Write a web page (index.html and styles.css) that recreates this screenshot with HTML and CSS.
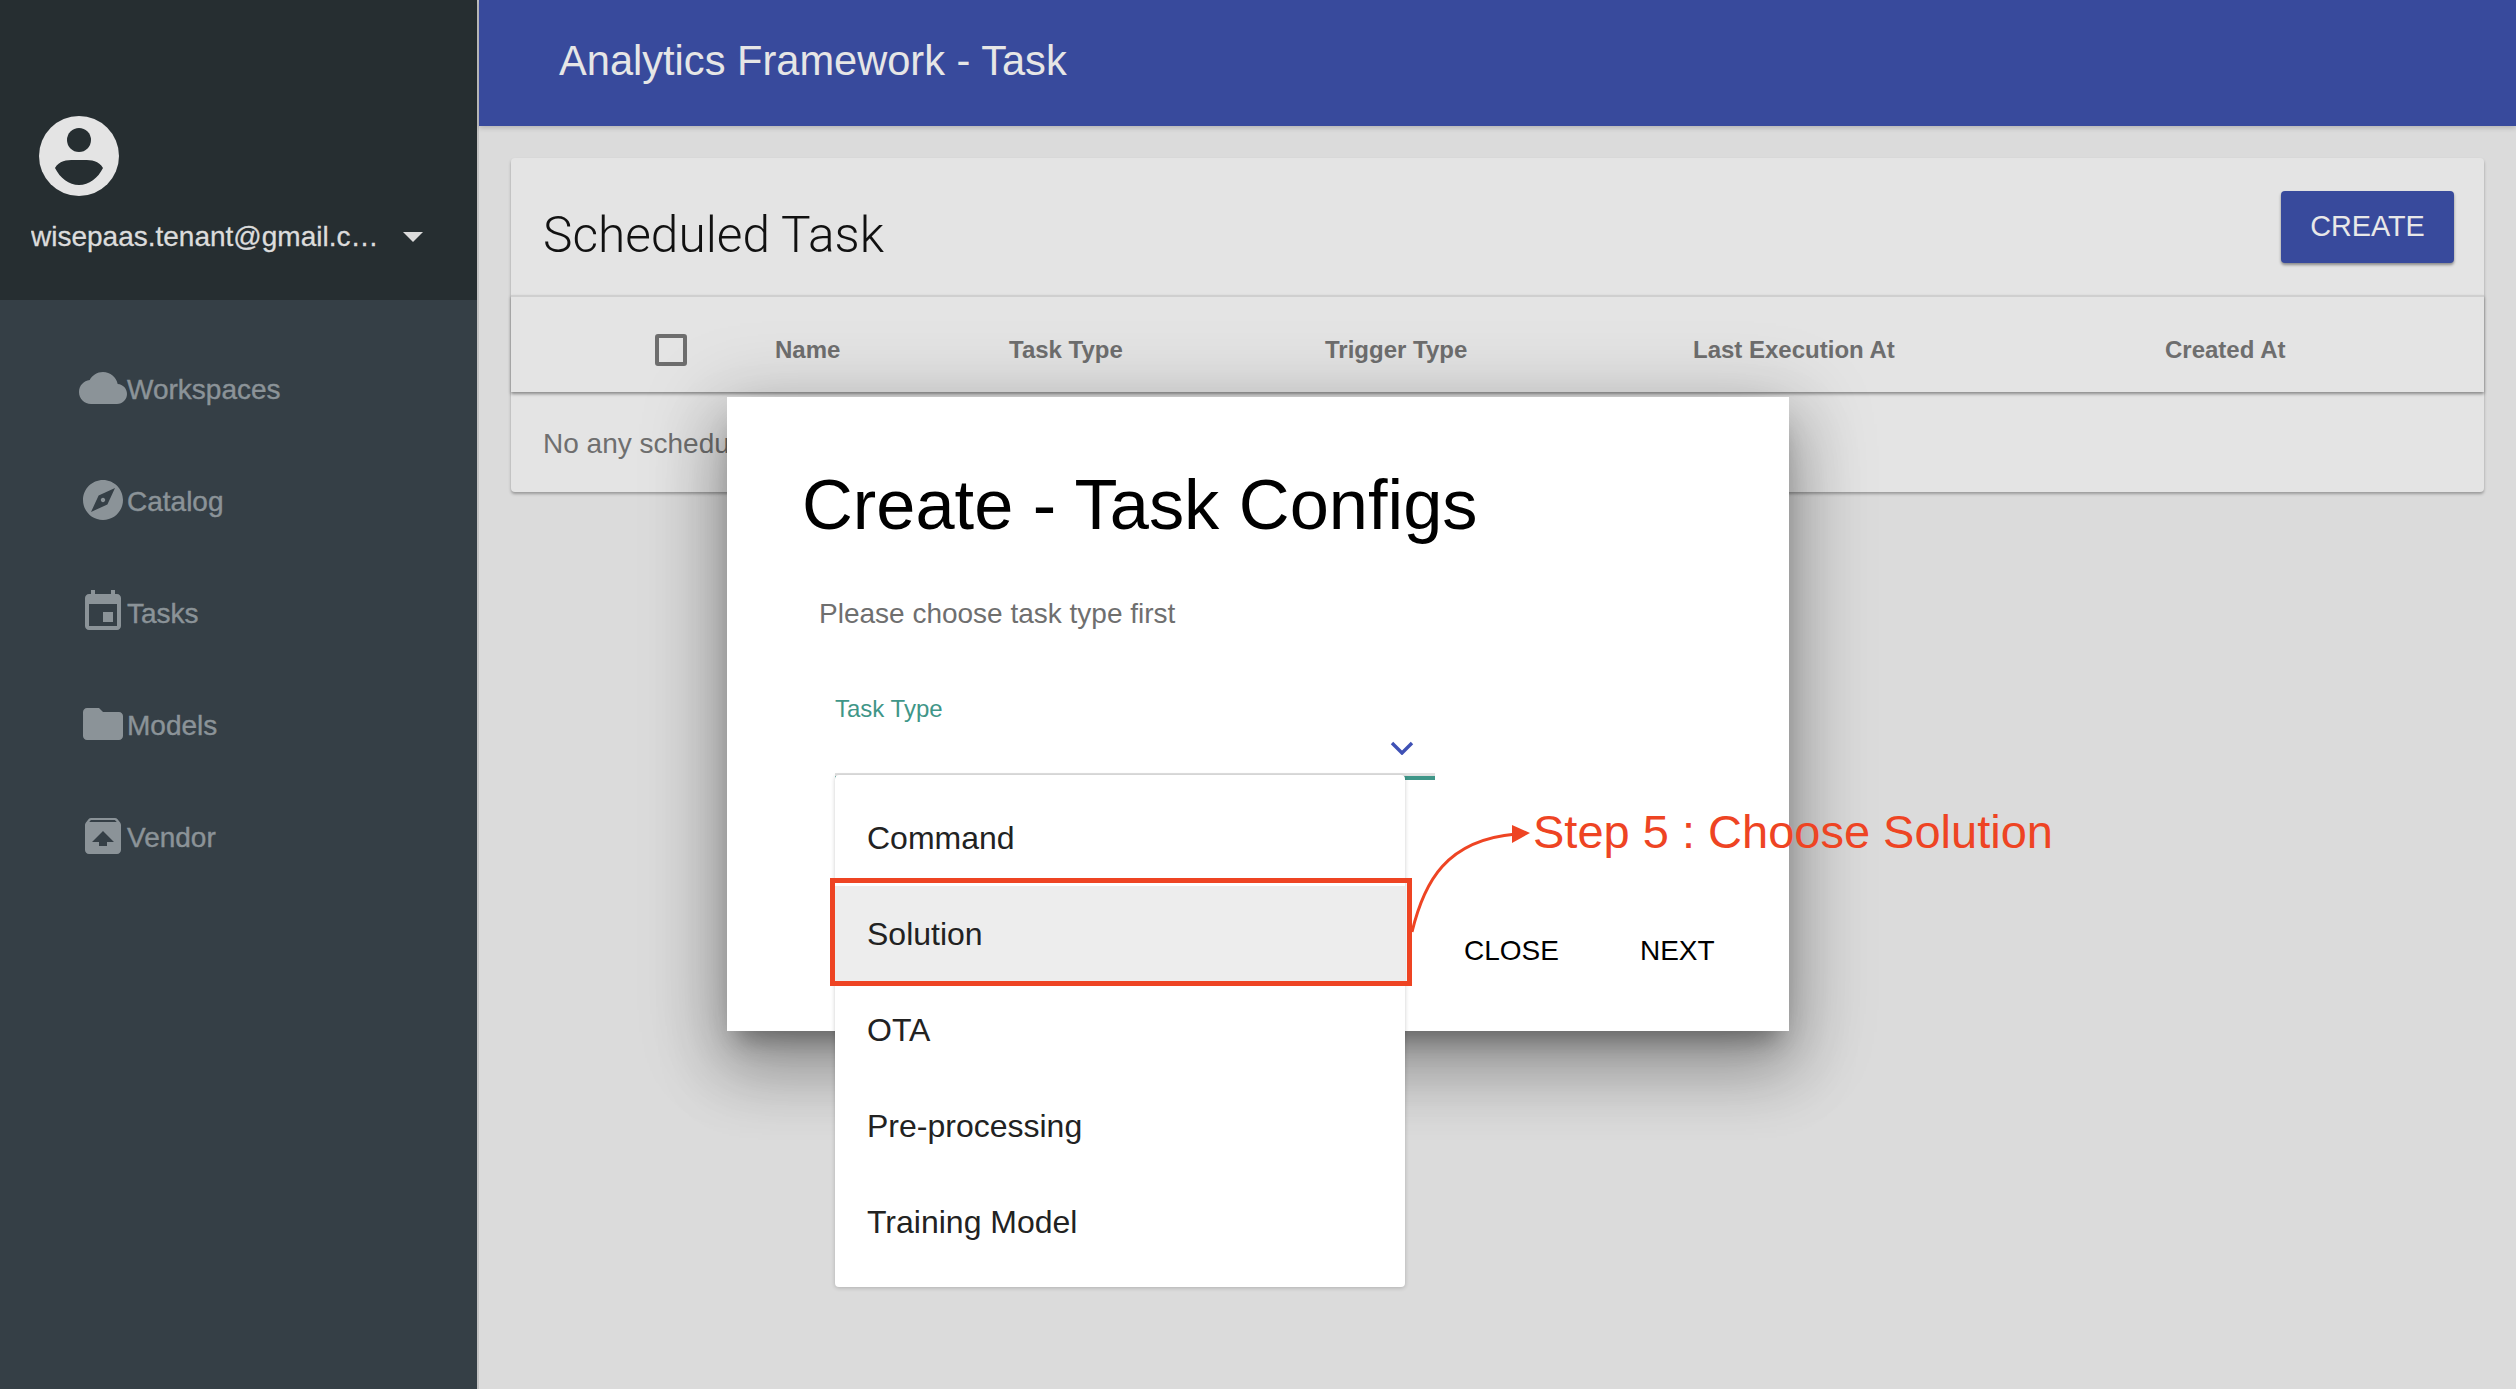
FILE: index.html
```html
<!DOCTYPE html>
<html lang="en">
<head>
<meta charset="utf-8">
<title>Analytics Framework - Task</title>
<link rel="stylesheet" href="styles.css">
</head>
<body>
<div class="app">
  <aside class="sidebar">
    <div class="user">
      <svg class="avatar" viewBox="0 0 80 80"><circle cx="40" cy="40" r="40" fill="#e4e4e4"/><circle cx="40" cy="24" r="12" fill="#262e31"/><path d="M16 52C21 43 31 44 40 44S59 43 64 52C59 62 50 69 40 69S21 62 16 52Z" fill="#262e31"/></svg>
      <div class="user-row">
        <span class="user-name">wisepaas.tenant@gmail.com</span>
        <span class="caret"></span>
      </div>
    </div>
    <nav class="nav">
      <a class="nav-item"><svg viewBox="0 0 24 24"><path d="M19.35 10.04C18.67 6.59 15.64 4 12 4 9.11 4 6.6 5.64 5.35 8.04 2.34 8.36 0 10.91 0 14c0 3.31 2.69 6 6 6h13c2.76 0 5-2.24 5-5 0-2.64-2.05-4.78-4.65-4.96z"/></svg><span class="nav-label">Workspaces</span></a>
      <a class="nav-item"><svg viewBox="0 0 24 24"><path d="M12 10.9c-.61 0-1.1.49-1.1 1.1s.49 1.1 1.1 1.1c.61 0 1.1-.49 1.1-1.1s-.49-1.1-1.1-1.1zM12 2C6.48 2 2 6.48 2 12s4.48 10 10 10 10-4.48 10-10S17.52 2 12 2zm2.19 12.19L6 18l3.81-8.19L18 6l-3.81 8.19z"/></svg><span class="nav-label">Catalog</span></a>
      <a class="nav-item"><svg viewBox="0 0 24 24"><path d="M17 12h-5v5h5v-5zM16 1v2H8V1H6v2H5c-1.11 0-1.99.9-1.99 2L3 19c0 1.1.89 2 2 2h14c1.1 0 2-.9 2-2V5c0-1.1-.9-2-2-2h-1V1h-2zm3 18H5V8h14v11z"/></svg><span class="nav-label">Tasks</span></a>
      <a class="nav-item"><svg viewBox="0 0 24 24"><path d="M10 4H4c-1.1 0-1.99.9-1.99 2L2 18c0 1.1.9 2 2 2h16c1.1 0 2-.9 2-2V8c0-1.1-.9-2-2-2h-8l-2-2z"/></svg><span class="nav-label">Models</span></a>
      <a class="nav-item"><svg viewBox="0 0 24 24"><path d="M20.55 5.22l-1.39-1.68C18.88 3.21 18.47 3 18 3H6c-.47 0-.88.21-1.15.55L3.46 5.22C3.17 5.57 3 6.01 3 6.5V19c0 1.1.89 2 2 2h14c1.1 0 2-.9 2-2V6.5c0-.49-.17-.93-.45-1.28zM12 9.5l5.5 5.5H14v2h-4v-2H6.5L12 9.5zM5.12 5l.82-1h12l.93 1H5.12z"/></svg><span class="nav-label">Vendor</span></a>
    </nav>
  </aside>
  <main class="main">
    <header class="topbar"><h1 class="topbar-title">Analytics Framework - Task</h1></header>
    <section class="content">
      <div class="card">
        <div class="card-head">
          <h2 class="card-title">Scheduled Task</h2>
          <button class="btn-create">CREATE</button>
        </div>
        <div class="table-head">
          <span class="check"></span>
          <span>Name</span>
          <span>Task Type</span>
          <span>Trigger Type</span>
          <span>Last Execution At</span>
          <span>Created At</span>
        </div>
        <div class="table-empty">No any scheduled task</div>
      </div>
    </section>
  </main>
</div>

<div class="dialog">
  <h3 class="dialog-title">Create - Task Configs</h3>
  <p class="dialog-hint">Please choose task type first</p>
  <div class="field">
    <label class="field-label">Task Type</label>
    <svg class="chevron" viewBox="0 0 24 14"><path d="M2 2L12 12L22 2" fill="none" stroke="#3f51b5" stroke-width="3.4"/></svg>
    <div class="field-line"></div>
  </div>
  <div class="dialog-actions">
    <span class="action">CLOSE</span>
    <span class="action">NEXT</span>
  </div>
  <ul class="menu">
    <li class="menu-item">Command</li>
    <li class="menu-item is-hover">Solution</li>
    <li class="menu-item">OTA</li>
    <li class="menu-item">Pre-processing</li>
    <li class="menu-item">Training Model</li>
  </ul>
</div>

<div class="mark-box"></div>
<svg class="mark-arrow" viewBox="0 0 130 120"><path d="M2 112C14 62 36 20 106 14" fill="none" stroke="#ee4423" stroke-width="3"/><path d="M102 5L120 13L102 23Z" fill="#ee4423"/></svg>
<div class="mark-text">Step 5 : Choose Solution</div>
</body>
</html>
```

FILE: styles.css
```css
* { box-sizing: border-box; }
html, body { margin: 0; padding: 0; height: 100%; overflow: hidden; }
body { font-family: "Liberation Sans", Arial, sans-serif; background: #dbdbdb; }
h1, h2, h3, p, ul { margin: 0; padding: 0; font-weight: 400; }

.app { display: flex; height: 1389px; }

.sidebar { width: 479px; flex: none; background: #353f46; border-right: 2px solid #c2c2c2; display: flex; flex-direction: column; }
.user { height: 300px; background: #262e31; padding: 116px 0 0 39px; }
.avatar { display: block; width: 80px; height: 80px; }
.user-row { display: flex; align-items: center; margin: 21px 0 0 -8px; height: 40px; }
.user-name { width: 354px; font-size: 28px; color: #dcdcdc; white-space: nowrap; overflow: hidden; text-overflow: ellipsis; -webkit-text-stroke: .3px #dcdcdc; }
.caret { margin-left: 18px; width: 0; height: 0; border-left: 10px solid transparent; border-right: 10px solid transparent; border-top: 10px solid #dcdcdc; }

.nav { display: flex; flex-direction: column; gap: 64px; padding: 64px 0 0 79px; }
.nav-item { display: flex; align-items: center; height: 48px; font-size: 28px; color: #8b9398; }
.nav-item svg { width: 48px; height: 48px; fill: #8b9398; flex: none; }
.nav-label { padding-top: 3px; -webkit-text-stroke: .4px #8b9398; }

.main { flex: 1; min-width: 0; display: flex; flex-direction: column; }
.topbar { height: 126px; flex: none; background: #384a9c; padding: 0 0 5px 80px; display: flex; align-items: center; box-shadow: 0 2px 5px rgba(0,0,0,.18); }
.topbar-title { font-size: 41.6px; color: #e6e6e6; }
.content { padding: 32px 32px 0 32px; }

.card { background: #e4e4e4; border-radius: 4px; box-shadow: 0 2px 3px rgba(0,0,0,.3); }
.card-head { height: 137px; padding: 0 30px 0 32px; display: flex; align-items: center; justify-content: space-between; }
.card-title { font-family: Roboto, "Liberation Sans", sans-serif; font-weight: 300; font-size: 49.6px; color: #111; margin-top: 16px; }
.btn-create { width: 173px; height: 72px; border: 0; border-radius: 4px; background: #384a9c; color: #e8e8e8; font: 400 28.8px "Liberation Sans", Arial, sans-serif; box-shadow: 0 2px 3px rgba(0,0,0,.4); }

.table-head { height: 97px; border-top: 2px solid #cfcfcf; padding: 10px 0 0 144px; display: grid; grid-template-columns: 120px 234px 316px 368px 472px 1fr; align-items: center; font-size: 24px; font-weight: 700; color: #6e6e6e; box-shadow: 0 2px 3px rgba(0,0,0,.4); position: relative; }
.check { width: 32px; height: 32px; border: 4px solid #6e6e6e; border-radius: 3px; }
.table-empty { height: 100px; padding: 3px 0 0 32px; display: flex; align-items: center; font-size: 28px; color: #6f6f6f; }

.dialog { position: absolute; left: 727px; top: 397px; width: 1062px; height: 634px; background: #fff; padding: 60px 47px 64px 75px; display: flex; flex-direction: column; box-shadow: 0 18px 24px -11px rgba(0,0,0,.35), 0 38px 61px 5px rgba(0,0,0,.22), 0 14px 74px 13px rgba(0,0,0,.18); }
.dialog-title { font-size: 70.4px; line-height: 96px; color: #000; }
.dialog-hint { margin: 45px 0 0 17px; font-size: 28px; line-height: 32px; color: #6f6f6f; }
.field { position: relative; margin: 64px 0 0 33px; width: 600px; height: 86px; }
.field-label { display: block; font-size: 24px; line-height: 30px; color: #3f9688; }
.chevron { position: absolute; left: 555px; top: 47px; width: 24px; height: 14px; }
.field-line { position: absolute; left: 0; right: 0; top: 79px; height: 7px; background: linear-gradient(#e0e0e0 0 3px, #3f9688 3px); }
.dialog-actions { display: flex; gap: 81px; margin: auto 0 0 662px; font-size: 28px; line-height: 32px; color: #000; }
.action { white-space: nowrap; }

.menu { position: absolute; left: 108px; top: 378px; width: 570px; height: 512px; padding: 15px 0 0; list-style: none; background: #fff; border-radius: 4px; box-shadow: 0 1px 4px rgba(0,0,0,.2); }
.menu-item { height: 96px; padding-left: 32px; display: flex; align-items: center; font-size: 32px; color: #222; }
.is-hover { background: #ededed; }

.mark-box { position: absolute; left: 830px; top: 878px; width: 582px; height: 108px; border: 5px solid #ee4423; }
.mark-arrow { position: absolute; left: 1410px; top: 820px; width: 130px; height: 120px; }
.mark-text { position: absolute; left: 1533px; top: 804px; font-size: 47px; line-height: 56px; color: #ee4423; white-space: nowrap; }
```
